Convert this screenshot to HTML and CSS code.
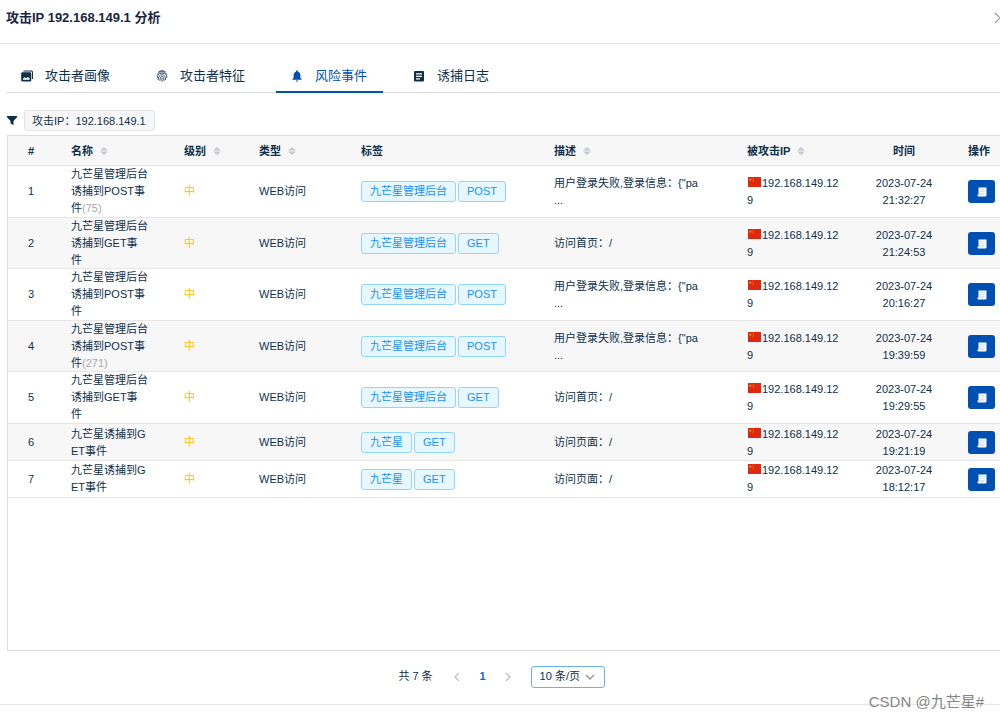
FILE: index.html
```html
<!DOCTYPE html>
<html lang="zh-CN">
<head>
<meta charset="utf-8">
<meta name="viewport" content="width=device-width, initial-scale=1">
<title>攻击IP 192.168.149.1 分析</title>
<link rel="stylesheet" href="styles.css">
</head>
<body>
<svg class="sprite" aria-hidden="true">
  <symbol id="sort" viewBox="0 0 8 8"><path d="M4 0 8 3.500H0zM4 8 0 4.500h8z"/></symbol>
  <symbol id="flag" viewBox="0 0 13 10"><path fill="#de2910" d="M0 0h13v10H0z"/><path fill="#ffb400" d="m2.300 1.200.4 1h1.100l-.9.7.4 1.100-1-.7-1 .7.4-1.100-.9-.7h1.100z"/><path fill="#f5a000" d="M4.500.8h.7v.7h-.7zM5.300 1.900H6v.7h-.7zM5.300 3.200H6v.7h-.7zM4.500 4.200h.7v.7h-.7z"/></symbol>
  <symbol id="doc" viewBox="0 0 10 10"><path fill="#fff" d="M1.500.5h8v7.800q0 1.200-1.200 1.200H1.500Q.5 9.500.5 8.500V7.500h1z"/><path stroke="#b5cbea" stroke-width=".6" d="M3.200 2.500h4.600M3.200 4.500h4.600M3.200 6.500h4.600M1.500 7.800h5.500"/></symbol>
</svg>
<div class="panel">
  <header class="panel-head">
    <h1 class="title">攻击IP 192.168.149.1 分析</h1>
    <button class="close" type="button" aria-label="关闭"><svg viewBox="0 0 12 12" width="12" height="12"><path d="m1 1 10 10M11 1 1 11"/></svg></button>
  </header>
  <nav class="tabs">
    <button class="tab" type="button"><svg class="tab-icon" viewBox="0 0 12 12"><path fill="currentColor" fill-rule="evenodd" d="M3.500.5H10.500q1.500 0 1.500 1.500V9h-1V2.500q0-1-1-1H2q.3-1 1.500-1zM1.500 2.300h7.500q1.300 0 1.300 1.300v6.600q0 1.300-1.300 1.300H1.500Q.2 11.500.2 10.200V3.600q0-1.300 1.300-1.300zM2 9.700h6.600V8.300L6.900 6.900 5.300 8.300 3.700 7.200 2 8.500z"/></svg>攻击者画像</button>
    <button class="tab" type="button"><svg class="tab-icon" viewBox="0 0 12 12"><g fill="none" stroke="currentColor" stroke-width=".8"><path d="M2.500 1.700Q6-.6 9.500 1.700M1 4.500Q3 1.500 6 1.600t5 2.900M1.200 8.500Q1 3.300 6 3.200t4.900 4.800M2.300 10Q2.500 4.800 6 4.800T9.600 10M3.800 11Q4 6.400 6 6.400T8.200 11M6 8v3.700"/></g></svg>攻击者特征</button>
    <button class="tab tab-active" type="button"><svg class="tab-icon" viewBox="0 0 12 12"><path fill="currentColor" d="M6 .3a.8.8 0 0 1 .8.800v.3Q9.300 2 9.400 4.800V8l1.300 1.300v.5H1.300v-.5L2.600 8V4.800Q2.700 2 5.200 1.400v-.3A.8.8 0 0 1 6 .3zM4.800 10.400h2.400a1.200 1.200 0 0 1-2.400 0z"/></svg>风险事件</button>
    <button class="tab" type="button"><svg class="tab-icon" viewBox="0 0 12 12"><path fill="currentColor" fill-rule="evenodd" d="M2 1h8q1 0 1 1v8.500q0 1-1 1H2q-1 0-1-1V2q0-1 1-1zM3 3.200v1.200h6V3.200zM3 5.700v1.200h6V5.700zM3 8.200v1.200h4V8.200z"/></svg>诱捕日志</button>
  </nav>
  <main class="content">
    <div class="filter">
      <svg class="filter-icon" viewBox="0 0 10 9"><path fill="currentColor" d="M0 0h10v1.300L6.500 5v4l-3-1.500V5L0 1.300z"/></svg>
      <span class="filter-tag">攻击IP：192.168.149.1</span>
    </div>
    <div class="table-box">
      <table class="events">
        <colgroup><col class="c-no"><col class="c-name"><col class="c-level"><col class="c-type"><col class="c-tags"><col><col class="c-ip"><col class="c-time"><col class="c-op"></colgroup>
        <thead>
          <tr><th class="no">#</th><th>名称<svg class="sort"><use href="#sort"/></svg></th><th>级别<svg class="sort"><use href="#sort"/></svg></th><th>类型<svg class="sort"><use href="#sort"/></svg></th><th>标签</th><th>描述<svg class="sort"><use href="#sort"/></svg></th><th>被攻击IP<svg class="sort"><use href="#sort"/></svg></th><th class="time">时间</th><th>操作</th></tr>
        </thead>
        <tbody>
          <tr><td class="no">1</td><td class="name">九芒星管理后台诱捕到POST事件<span class="count">(75)</span></td><td class="level">中</td><td>WEB访问</td><td><div class="tags"><span class="tag">九芒星管理后台</span><span class="tag">POST</span></div></td><td>用户登录失败,登录信息：{"pa<br>...</td><td class="ip"><svg class="flag"><use href="#flag"/></svg>192.168.149.129</td><td class="time">2023-07-24 21:32:27</td><td><button class="op" type="button" aria-label="详情"><svg class="doc"><use href="#doc"/></svg></button></td></tr>
          <tr><td class="no">2</td><td class="name">九芒星管理后台诱捕到GET事件</td><td class="level">中</td><td>WEB访问</td><td><div class="tags"><span class="tag">九芒星管理后台</span><span class="tag">GET</span></div></td><td>访问首页：/</td><td class="ip"><svg class="flag"><use href="#flag"/></svg>192.168.149.129</td><td class="time">2023-07-24 21:24:53</td><td><button class="op" type="button" aria-label="详情"><svg class="doc"><use href="#doc"/></svg></button></td></tr>
          <tr><td class="no">3</td><td class="name">九芒星管理后台诱捕到POST事件</td><td class="level">中</td><td>WEB访问</td><td><div class="tags"><span class="tag">九芒星管理后台</span><span class="tag">POST</span></div></td><td>用户登录失败,登录信息：{"pa<br>...</td><td class="ip"><svg class="flag"><use href="#flag"/></svg>192.168.149.129</td><td class="time">2023-07-24 20:16:27</td><td><button class="op" type="button" aria-label="详情"><svg class="doc"><use href="#doc"/></svg></button></td></tr>
          <tr><td class="no">4</td><td class="name">九芒星管理后台诱捕到POST事件<span class="count">(271)</span></td><td class="level">中</td><td>WEB访问</td><td><div class="tags"><span class="tag">九芒星管理后台</span><span class="tag">POST</span></div></td><td>用户登录失败,登录信息：{"pa<br>...</td><td class="ip"><svg class="flag"><use href="#flag"/></svg>192.168.149.129</td><td class="time">2023-07-24 19:39:59</td><td><button class="op" type="button" aria-label="详情"><svg class="doc"><use href="#doc"/></svg></button></td></tr>
          <tr><td class="no">5</td><td class="name">九芒星管理后台诱捕到GET事件</td><td class="level">中</td><td>WEB访问</td><td><div class="tags"><span class="tag">九芒星管理后台</span><span class="tag">GET</span></div></td><td>访问首页：/</td><td class="ip"><svg class="flag"><use href="#flag"/></svg>192.168.149.129</td><td class="time">2023-07-24 19:29:55</td><td><button class="op" type="button" aria-label="详情"><svg class="doc"><use href="#doc"/></svg></button></td></tr>
          <tr><td class="no">6</td><td class="name">九芒星诱捕到GET事件</td><td class="level">中</td><td>WEB访问</td><td><div class="tags"><span class="tag">九芒星</span><span class="tag">GET</span></div></td><td>访问页面：/</td><td class="ip"><svg class="flag"><use href="#flag"/></svg>192.168.149.129</td><td class="time">2023-07-24 19:21:19</td><td><button class="op" type="button" aria-label="详情"><svg class="doc"><use href="#doc"/></svg></button></td></tr>
          <tr><td class="no">7</td><td class="name">九芒星诱捕到GET事件</td><td class="level">中</td><td>WEB访问</td><td><div class="tags"><span class="tag">九芒星</span><span class="tag">GET</span></div></td><td>访问页面：/</td><td class="ip"><svg class="flag"><use href="#flag"/></svg>192.168.149.129</td><td class="time">2023-07-24 18:12:17</td><td><button class="op" type="button" aria-label="详情"><svg class="doc"><use href="#doc"/></svg></button></td></tr>
        </tbody>
      </table>
    </div>
  </main>
  <footer class="pager">
    <span class="total">共 7 条</span>
    <button class="arrow" type="button" aria-label="上一页"><svg viewBox="0 0 6 10" width="6" height="10"><path d="M5 1 1 5l4 4"/></svg></button>
    <button class="page" type="button">1</button>
    <button class="arrow" type="button" aria-label="下一页"><svg viewBox="0 0 6 10" width="6" height="10"><path d="m1 1 4 4-4 4"/></svg></button>
    <div class="size">
      <select class="size-select" aria-label="每页条数"><option>10 条/页</option></select>
      <svg class="size-arrow" viewBox="0 0 10 6"><path d="m1 1 4 4 4-4"/></svg>
    </div>
  </footer>
</div>
<div class="watermark">CSDN @九芒星#</div>
</body>
</html>
```

FILE: styles.css
```css
* { box-sizing: border-box; }

body {
  margin: 0;
  background: #fff;
  color: #0f2f4b;
  font: 11px/17px "Liberation Sans", "Noto Sans CJK SC", sans-serif;
  overflow-x: hidden;
}

button {
  padding: 0;
  border: 0;
  background: none;
  color: inherit;
  font: inherit;
  cursor: pointer;
}

.sprite { position: absolute; width: 0; height: 0; }

.panel {
  display: flex;
  flex-direction: column;
  min-height: 100vh;
  padding-bottom: 14px;
}

.panel-head {
  display: flex;
  align-items: center;
  justify-content: space-between;
  height: 44px;
  padding: 0 0 8px 6px;
  border-bottom: 1px solid #e8e8e8;
}

.title { margin: 0; color: #1a2440; font-size: 13px; font-weight: 600; }

.close { display: flex; margin-right: -6px; }
.close path { fill: none; stroke: #999; stroke-width: 1.2; }

.tabs {
  display: flex;
  gap: 15px;
  margin: 16px 0 0 6px;
  border-bottom: 1px solid #dcdcdc;
}

.tab {
  display: flex;
  align-items: center;
  gap: 12px;
  height: 33px;
  margin-bottom: -1px;
  padding: 0 16px 0 15px;
  border-bottom: 2px solid transparent;
  font-size: 13px;
}

.tab-active { color: #0050b3; border-color: #0050b3; }
.tab-icon { width: 12px; height: 12px; }

.content {
  display: flex;
  flex: 1;
  flex-direction: column;
  padding: 17px 0 0 7px;
}

.filter { display: flex; align-items: center; gap: 7px; margin-bottom: 4px; }
.filter-icon { width: 10px; height: 9px; }

.filter-tag {
  height: 21px;
  padding: 0 8px 0 7px;
  border: 1px solid #e4e4e4;
  border-radius: 3px;
  background: #f7f7f7;
  line-height: 20px;
}

.table-box {
  flex: 1;
  border: 1px solid #dcdcdc;
  border-right: 0;
  overflow: hidden;
}

.events {
  width: 100%;
  min-width: 992px;
  table-layout: fixed;
  border-collapse: collapse;
}

.c-no { width: 55px; }
.c-name { width: 113px; }
.c-level { width: 75px; }
.c-type { width: 102px; }
.c-tags { width: 193px; }
.c-ip { width: 109px; }
.c-time { width: 112px; }
.c-op { width: 40px; }

.events th,
.events td {
  padding: 0 0 0 8px;
  box-shadow: inset 0 -1px #e6e6e6;
  text-align: left;
  vertical-align: middle;
}

.events th { height: 30px; background: #f7f7f7; font-weight: 600; }
.events td { height: 37px; }
.events tr:nth-child(odd) td { padding-bottom: 1px; }
.events tr:nth-child(even) td { background: #f7f7f7; }
.events .no { padding-left: 20px; }
.events .name { padding-right: 28px; word-break: break-all; }
.events .ip { padding-right: 8px; word-break: break-all; }
.events .time { padding: 0 8px; text-align: center; }

.level { color: #ffbf00; }
.count { color: #aaa; }

.sort { width: 8px; height: 8px; margin-left: 7px; fill: #c8c9cf; }

.tags { display: flex; gap: 2px; }

.tag {
  height: 21px;
  padding: 0 8px;
  border: 1px solid #91d5ff;
  border-radius: 3px;
  background: #e6f7ff;
  color: #1890ff;
  line-height: 19px;
}

.flag { width: 13px; height: 10px; margin: 0 1px; }

.op {
  display: flex;
  align-items: center;
  justify-content: center;
  width: 27px;
  height: 23px;
  border-radius: 3px;
  background: #0050b3;
}

.doc { width: 10px; height: 10px; }

.pager {
  display: flex;
  align-items: center;
  justify-content: center;
  height: 54px;
  padding: 0 0 2px 3px;
  border-bottom: 1px solid #e8e8e8;
}

.total { margin-right: 12px; }
.page { width: 26px; color: #1766c2; font-weight: 600; }
.arrow { display: flex; align-items: center; justify-content: center; width: 25px; height: 22px; }
.arrow path { fill: none; stroke: #bfbfbf; stroke-width: 1.3; }

.size { position: relative; margin-left: 10px; }

.size-select {
  display: block;
  width: 74px;
  height: 22px;
  padding: 0 8px;
  border: 1px solid #69b1f7;
  border-radius: 3px;
  background: #fff;
  color: inherit;
  font: inherit;
  appearance: none;
}

.size-arrow {
  position: absolute;
  top: 8px;
  right: 10px;
  width: 10px;
  height: 6px;
  fill: none;
  stroke: #8c96a3;
  stroke-width: 1.4;
  pointer-events: none;
}

.watermark {
  position: absolute;
  right: 16px;
  bottom: 7px;
  color: #858585;
  font-size: 15px;
  line-height: 20px;
}
```
